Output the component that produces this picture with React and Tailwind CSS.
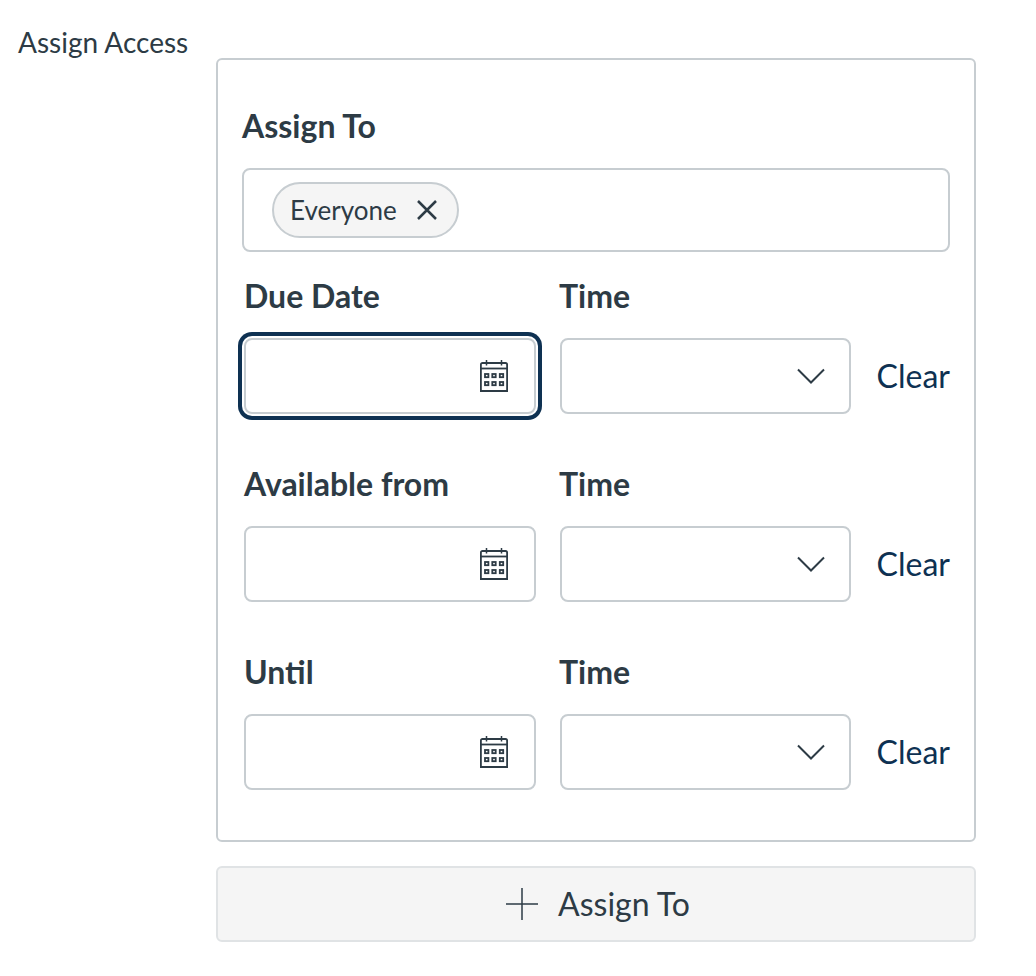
import React from "react";

function CalendarIcon() {
  return (
    <svg width="28" height="32" viewBox="0 0 28 32" fill="none" stroke="#2d3b45" strokeWidth="1.800" className="shrink-0">
      <path d="M2.500 3h23a1.600 1.600 0 0 1 1.600 1.600V31H0.900V4.600A1.600 1.600 0 0 1 2.500 3z" />
      <path d="M0.900 8.500h26.200" />
      <path d="M6.500 0v5.500M21.500 0v5.500" strokeWidth="1.500" />
      <rect x="5" y="14" width="3.400" height="3.200" />
      <rect x="12.300" y="14" width="3.400" height="3.200" />
      <rect x="19.800" y="14" width="3.400" height="3.200" />
      <rect x="5" y="22" width="3.400" height="3.200" />
      <rect x="12.300" y="22" width="3.400" height="3.200" />
      <rect x="19.800" y="22" width="3.400" height="3.200" />
    </svg>
  );
}

function DateRow({ label, focused, className }) {
  return (
    <div className={className}>
      <div className="flex">
        <div className="w-[317px] pl-[2px] text-[32px] leading-[40px] font-bold">{label}</div>
        <div className="text-[32px] leading-[40px] font-bold">Time</div>
      </div>
      <div className="mt-[22px] flex items-center">
        <div
          className={`ml-[2px] flex h-[76px] w-[292px] items-center justify-end rounded-[8px] border-2 border-[#c7cdd1] bg-white pr-[26px] ${
            focused ? "shadow-[0_0_0_2px_#ffffff,0_0_0_6px_#0e3152]" : ""
          }`}
        >
          <CalendarIcon />
        </div>
        <div className="ml-[24px] flex h-[76px] w-[291px] items-center justify-end rounded-[8px] border-2 border-[#c7cdd1] bg-white pr-[24px]">
          <svg width="28" height="16" viewBox="0 0 28 16" fill="none" stroke="#2d3b45" strokeWidth="2">
            <path d="M1 1.500l13 13 13-13" />
          </svg>
        </div>
        <div className="ml-[26px] text-[32px] leading-[40px] text-[#0e3152]">Clear</div>
      </div>
    </div>
  );
}

export default function App() {
  return (
    <div className="min-h-[976px] bg-white font-['Lato',sans-serif] text-[#2d3b45]">
      <div className="flex pl-[18px] pt-[25px]">
        <div className="w-[198px] shrink-0 text-[28px] leading-[34px]">Assign Access</div>
        <div className="mt-[33px] w-[760px] shrink-0">
          <div className="h-[784px] rounded-[6px] border-2 border-[#c7cdd1] bg-white px-[24px] pt-[46px]">
            <div className="text-[32px] leading-[40px] font-bold">Assign To</div>
            <div className="mt-[22px] flex h-[84px] items-center rounded-[8px] border-2 border-[#c7cdd1] pl-[28px]">
              <div className="flex h-[56px] w-[187px] items-center rounded-full border-2 border-[#c7cdd1] bg-[#f5f5f5] pl-[16px]">
                <span className="text-[26px] leading-[34px]">Everyone</span>
                <svg width="22" height="22" viewBox="0 0 22 22" fill="none" stroke="#2d3b45" strokeWidth="2.500" className="ml-[19px]">
                  <path d="M2 2l18 18M20 2L2 20" />
                </svg>
              </div>
            </div>
            <DateRow label="Due Date" focused className="mt-[24px]" />
            <DateRow label="Available from" className="mt-[50px]" />
            <DateRow label="Until" className="mt-[50px]" />
          </div>
          <button className="mt-[24px] flex h-[76px] w-full items-center justify-center rounded-[6px] border-2 border-[#e0e3e5] bg-[#f5f5f5] pl-[4px] text-[32px] leading-[40px]">
            <svg width="32" height="32" viewBox="0 0 32 32" fill="none" stroke="#2d3b45" strokeWidth="1.500">
              <path d="M16 0v32M0 16h32" />
            </svg>
            <span className="ml-[20px]">Assign To</span>
          </button>
        </div>
      </div>
    </div>
  );
}
